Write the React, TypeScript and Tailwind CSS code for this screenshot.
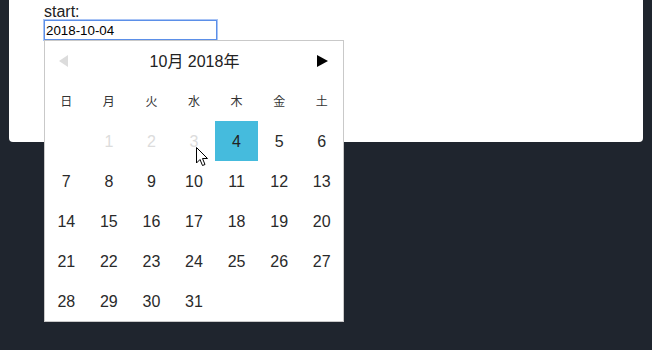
import React from "react";

const weekDays = ["日", "月", "火", "水", "木", "金", "土"];

// October 2018 starts on a Monday
const cells: (number | null)[] = [null, ...Array.from({ length: 31 }, (_, i) => i + 1)];

export default function App() {
  return (
    <div className="relative w-[652px] h-[350px] overflow-hidden bg-[#1f252e] font-['Liberation_Sans','Noto_Sans_CJK_JP',sans-serif]">
      <div className="ml-[9px] w-[634px] h-[142px] bg-white rounded-b-[4px] pl-[35px]">
        <div className="pt-[3px] h-[20px] text-[16px] leading-[17px] text-[#222]">start:</div>
        <input
          readOnly
          value="2018-10-04"
          className="block w-[173px] h-[20px] px-[1px] text-[13.333px] leading-[16px] text-black border border-[#5b8fe8] outline outline-1 outline-[#a9c4f5] font-['Liberation_Sans',sans-serif]"
        />
      </div>

      {/* datepicker popup */}
      <div className="absolute left-[44px] top-[40px] w-[300px] h-[282px] bg-white border border-[#c9c9c9] text-[#333]">
        <div className="h-[40px] flex items-center justify-between px-[13px]">
          <svg width="10" height="12" viewBox="0 0 10 12" className="ml-[1px]">
            <polygon points="9,0 9,12 0,6" fill="#dcdcdc" />
          </svg>
          <div className="pl-[3px] pt-[1px] text-[16px] text-[#222]">10月 2018年</div>
          <svg width="11" height="12" viewBox="0 0 11 12" className="mr-[2px]">
            <polygon points="0,0 0,12 11,6" fill="#000" />
          </svg>
        </div>
        <div className="grid grid-cols-7">
          {weekDays.map((d) => (
            <div key={d} className="h-[40px] flex items-center justify-center text-[12px] text-[#333] font-['Noto_Sans_CJK_JP',sans-serif]">
              {d}
            </div>
          ))}
          {cells.map((n, i) => {
            const disabled = n !== null && n < 4;
            const selected = n === 4;
            return (
              <div
                key={i}
                className={
                  selected
                    ? "h-[40px] pt-[1px] flex items-center justify-center text-[16px] bg-[#45bbdd] text-[#222]"
                    : disabled
                    ? "h-[40px] pt-[1px] flex items-center justify-center text-[16px] text-[#dcdcdc]"
                    : "h-[40px] pt-[1px] flex items-center justify-center text-[16px] text-[#2a2a2a]"
                }
              >
                {n ?? ""}
              </div>
            );
          })}
        </div>
      </div>

      {/* mouse pointer */}
      <svg className="absolute left-[196px] top-[147px]" width="13" height="20" viewBox="0 0 13 20">
        <path d="M0.5 0.5 L0.5 16 L4 12.5 L6.5 18.5 L9 17.5 L6.5 11.5 L11.5 11.5 Z" fill="#fff" stroke="#000" strokeWidth="1" strokeLinejoin="miter" />
      </svg>
    </div>
  );
}
